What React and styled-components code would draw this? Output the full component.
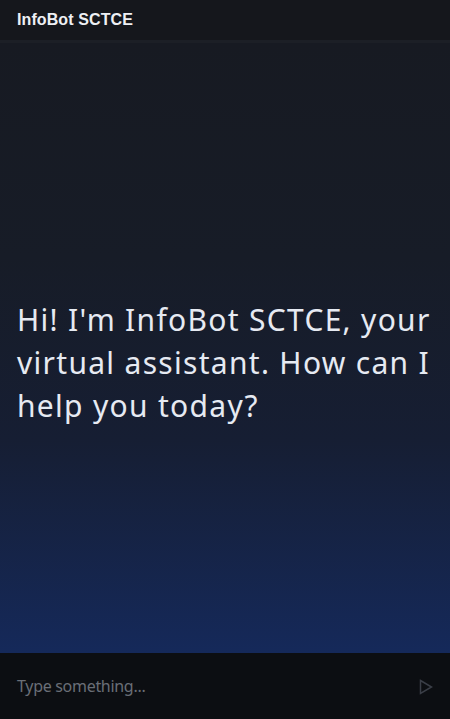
import React from 'react';
import styled, { createGlobalStyle } from 'styled-components';

const GlobalStyle = createGlobalStyle`
  html, body {
    margin: 0;
    padding: 0;
    background: #0c0e12;
  }
  #root {
    height: 100vh;
  }
`;

// Marco del chat
const ChatFrame = styled.div`
  display: flex;
  flex-direction: column;
  width: 450px;
  height: 719px;
  font-family: 'Noto Sans', 'Liberation Sans', sans-serif;
  overflow: hidden;
`;

// Cabecera
const Header = styled.header`
  height: 40px;
  flex-shrink: 0;
  display: flex;
  align-items: center;
  padding: 0 17px;
  background: #15171c;
  border-bottom: 3px solid #1c1f26;
`;

const Title = styled.h1`
  margin: 0;
  font-family: 'Liberation Sans', Arial, sans-serif;
  font-size: 16px;
  font-weight: 700;
  letter-spacing: 0.1px;
  color: #eef0f4;
`;

// Zona de mensajes
const Messages = styled.main`
  flex: 1;
  display: flex;
  flex-direction: column;
  justify-content: center;
  padding: 28px 17px 0;
  background: linear-gradient(180deg, #171a22 0%, #171c27 35%, #161e33 65%, #15295a 100%);
`;

const Greeting = styled.p`
  margin: 0;
  font-size: 30px;
  line-height: 43px;
  color: #e6eaf2;
  letter-spacing: 1.3px;
`;

// Barra de entrada
const InputBar = styled.footer`
  height: 66px;
  flex-shrink: 0;
  display: flex;
  align-items: center;
  justify-content: space-between;
  padding: 0 17px;
  background: #0c0e12;
`;

const Placeholder = styled.span`
  font-size: 16px;
  color: #6a6e77;
  letter-spacing: -0.3px;
`;

const SendButton = styled.button`
  border: 0;
  background: none;
  padding: 0;
  margin-top: 2px;
  display: flex;
  color: #3a3e47;
`;

const App = () => {
  return (
    <>
      <GlobalStyle />
      <ChatFrame>
        <Header>
          <Title>InfoBot SCTCE</Title>
        </Header>
        <Messages>
          <Greeting>Hi! I'm InfoBot SCTCE, your virtual assistant. How can I help you today?</Greeting>
        </Messages>
        <InputBar>
          <Placeholder>Type something...</Placeholder>
          <SendButton aria-label="Send">
            <svg width="14" height="16" viewBox="0 0 14 16" fill="none" stroke="currentColor" strokeWidth="1.5">
              <path d="M1.5 1.5 L12.5 8 L1.5 14.5 Z" />
            </svg>
          </SendButton>
        </InputBar>
      </ChatFrame>
    </>
  );
};

export default App;
